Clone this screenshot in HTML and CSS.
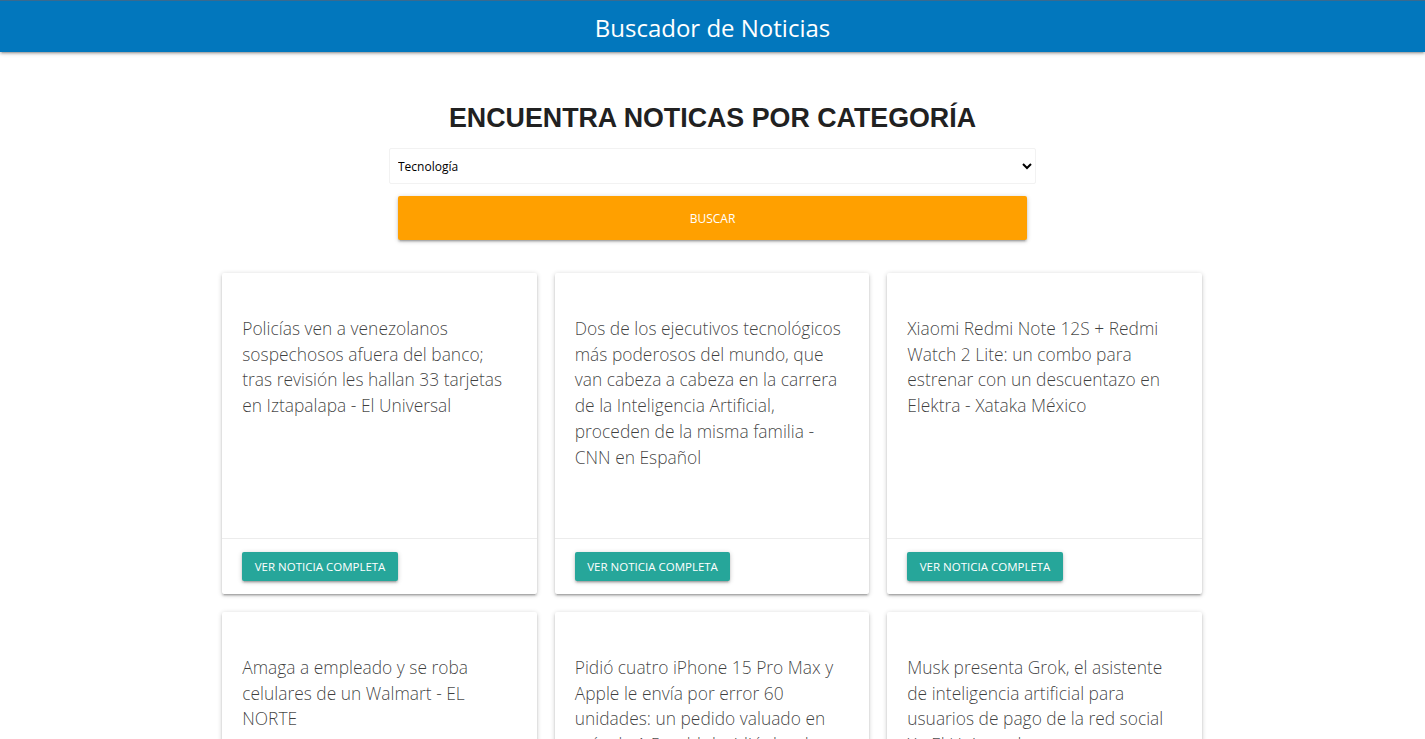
FILE: index.html
```html
<!DOCTYPE html>
<html lang="es">
<head>
<meta charset="utf-8">
<title>Buscador de Noticias</title>
<link rel="stylesheet" href="styles.css">
</head>
<body>
<header class="nav">
  <h1 class="brand">Buscador de Noticias</h1>
</header>
<main class="container">
  <h2 class="heading">ENCUENTRA NOTICAS POR CATEGORÍA</h2>
  <form class="search">
    <select class="select">
      <option>Tecnología</option>
    </select>
    <button type="button" class="btn-search">BUSCAR</button>
  </form>
  <section class="grid">
    <article class="card">
      <div class="card-content"><p class="card-text">Policías ven a venezolanos sospechosos afuera del banco; tras revisión les hallan 33 tarjetas en Iztapalapa - El Universal</p></div>
      <div class="card-action"><a class="btn-card">VER NOTICIA COMPLETA</a></div>
    </article>
    <article class="card">
      <div class="card-content"><p class="card-text">Dos de los ejecutivos tecnológicos más poderosos del mundo, que van cabeza a cabeza en la carrera de la Inteligencia Artificial, proceden de la misma familia - CNN en Español</p></div>
      <div class="card-action"><a class="btn-card">VER NOTICIA COMPLETA</a></div>
    </article>
    <article class="card">
      <div class="card-content"><p class="card-text">Xiaomi Redmi Note 12S + Redmi Watch 2 Lite: un combo para estrenar con un descuentazo en Elektra - Xataka México</p></div>
      <div class="card-action"><a class="btn-card">VER NOTICIA COMPLETA</a></div>
    </article>
    <article class="card">
      <div class="card-content"><p class="card-text">Amaga a empleado y se roba celulares de un Walmart - EL NORTE</p></div>
      <div class="card-action"><a class="btn-card">VER NOTICIA COMPLETA</a></div>
    </article>
    <article class="card">
      <div class="card-content"><p class="card-text">Pidió cuatro iPhone 15 Pro Max y Apple le envía por error 60 unidades: un pedido valuado en más de 1.5 mdd decidió devolver - Infobae</p></div>
      <div class="card-action"><a class="btn-card">VER NOTICIA COMPLETA</a></div>
    </article>
    <article class="card">
      <div class="card-content"><p class="card-text">Musk presenta Grok, el asistente de inteligencia artificial para usuarios de pago de la red social X - El Universal</p></div>
      <div class="card-action"><a class="btn-card">VER NOTICIA COMPLETA</a></div>
    </article>
  </section>
</main>
</body>
</html>
```
FILE: styles.css
```css
html, body {
  margin: 0;
  padding: 0;
}
body {
  font-family: "Open Sans", "Noto Sans", sans-serif;
  color: rgba(0, 0, 0, 0.87);
  background: #fff;
}
.nav {
  height: 52px;
  box-sizing: border-box;
  padding-top: 3px;
  background: #0277bd;
  border-top: 1px solid #3a6a8f;
  display: flex;
  align-items: center;
  justify-content: center;
  box-shadow: 0 2px 2px 0 rgba(0,0,0,.14), 0 3px 1px -2px rgba(0,0,0,.12), 0 1px 5px 0 rgba(0,0,0,.2);
}
.brand {
  margin: 0;
  color: #fff;
  font-weight: 400;
  font-size: 24px;
  line-height: 1;
}
.container {
  width: 70%;
  margin: 0 auto;
}
.heading {
  margin: 51px 0 15px;
  text-align: center;
  font-family: "Liberation Sans", Arial, sans-serif;
  font-weight: 700;
  font-size: 26.8px;
  line-height: 30px;
  color: #212121;
}
.search {
  width: 66.6667%;
  margin: 0 auto;
  box-sizing: border-box;
  padding: 0 9px;
  display: flex;
  flex-direction: column;
}
.select {
  height: 36px;
  border: 1px solid #f2f2f2;
  border-radius: 2px;
  background: #fff;
  font-family: inherit;
  font-size: 12px;
  color: #000;
  padding: 0 4px;
  margin: 0 0 12px;
}
.btn-search {
  margin: 0 9px;
  height: 44px;
  border: none;
  border-radius: 2px;
  background: #ffa000;
  color: #fff;
  font-family: inherit;
  font-size: 12px;
  box-shadow: 0 2px 2px 0 rgba(0,0,0,.14), 0 3px 1px -2px rgba(0,0,0,.12), 0 1px 5px 0 rgba(0,0,0,.2);
}
.grid {
  margin-top: 33px;
  padding: 0 9.5px 0 8.5px;
  display: grid;
  grid-template-columns: repeat(3, 1fr);
  gap: 18px;
}
.card {
  background: #fff;
  border-radius: 2px;
  box-shadow: 0 2px 2px 0 rgba(0,0,0,.14), 0 3px 1px -2px rgba(0,0,0,.12), 0 1px 5px 0 rgba(0,0,0,.2);
  display: flex;
  flex-direction: column;
}
.card-content {
  height: 265px;
  box-sizing: border-box;
  padding: 43px 26px 20px 20px;
}
.card-text {
  margin: 0;
  font-weight: 300;
  font-size: 17.4px;
  line-height: 25.7px;
  color: rgba(0, 0, 0, 0.75);
}
.card-action {
  border-top: 1px solid rgba(160,160,160,0.2);
  padding: 13px 20px;
  display: flex;
}
.btn-card {
  display: inline-flex;
  align-items: center;
  height: 29px;
  padding: 0 12.5px;
  border-radius: 2px;
  background: #26a69a;
  color: #fff;
  font-size: 11.5px;
  box-shadow: 0 2px 2px 0 rgba(0,0,0,.14), 0 3px 1px -2px rgba(0,0,0,.12), 0 1px 5px 0 rgba(0,0,0,.2);
}
```
